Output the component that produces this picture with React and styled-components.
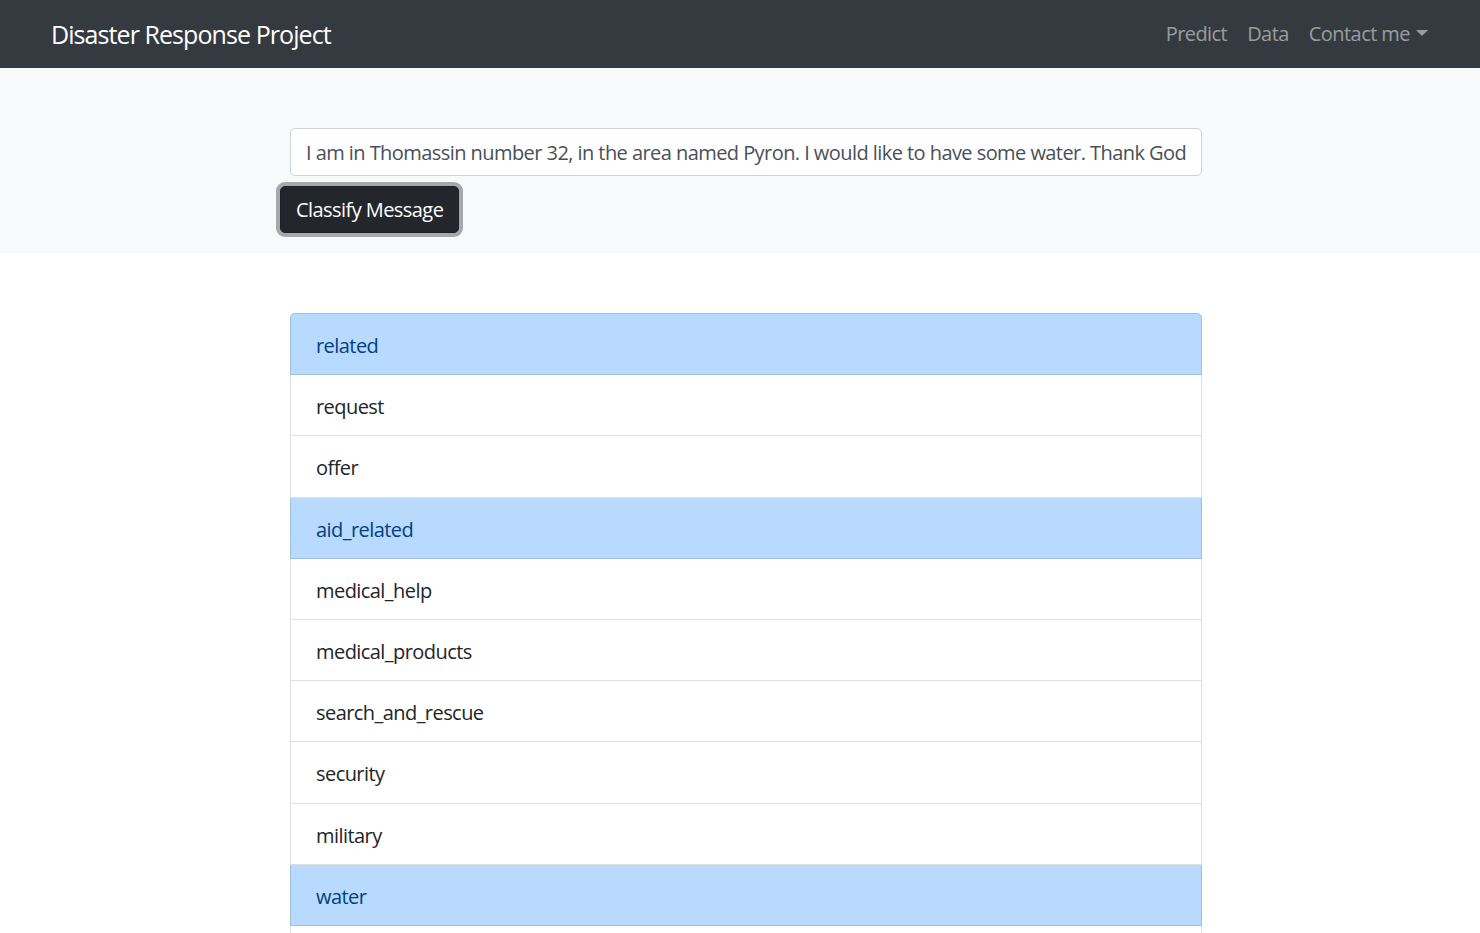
import React from 'react';
import styled, {createGlobalStyle} from 'styled-components';

const GlobalStyle = createGlobalStyle`
  html, body {
    margin: 0;
    padding: 0;
  }
  body {
    font-family: "Segoe UI", "Open Sans", "Noto Sans", sans-serif;
    font-size: 20px;
    line-height: 1.5;
    letter-spacing: -0.028em;
    color: #212529;
    background-color: #fff;
  }
  * {
    box-sizing: border-box;
  }
`;

const Navbar = styled.nav`
  display: flex;
  align-items: center;
  justify-content: space-between;
  height: 68px;
  padding: 0 42px 0 51px;
  background-color: #343a40;
`;

const Brand = styled.a`
  font-size: 25px;
  line-height: 37px;
  letter-spacing: -0.037em;
  color: #fff;
  text-decoration: none;
  white-space: nowrap;
`;

const NavList = styled.ul`
  display: flex;
  list-style: none;
  margin: 0;
  padding: 0;
`;

const NavLink = styled.a`
  display: block;
  padding: 0 10px;
  font-size: 20px;
  line-height: 30px;
  color: rgba(255, 255, 255, 0.5);
  text-decoration: none;
  white-space: nowrap;

  ${props => props.$toggle && `
    &::after {
      content: "";
      display: inline-block;
      margin-left: 0.3em;
      vertical-align: 0.255em;
      border-top: 0.3em solid;
      border-right: 0.3em solid transparent;
      border-left: 0.3em solid transparent;
      border-bottom: 0;
    }
  `}
`;

const Jumbotron = styled.section`
  background-color: #f8f9fa;
  padding: 60px 0 20px;
`;

const Container = styled.div`
  width: 912px;
  margin-left: calc(50% - 450px);
`;

const Input = styled.input`
  display: block;
  width: 100%;
  height: 48px;
  padding: 0 15px;
  font-family: inherit;
  font-size: 20px;
  letter-spacing: inherit;
  color: #495057;
  background-color: #fff;
  border: 1px solid #ced4da;
  border-radius: 5px;
  outline: none;
`;

const Button = styled.button`
  display: inline-block;
  height: 47px;
  margin: 10px 0 0 -10px;
  padding: 0 15px;
  font-family: inherit;
  font-size: 20px;
  line-height: 30px;
  letter-spacing: inherit;
  color: #fff;
  background-color: #23272b;
  border: 1px solid #1d2124;
  border-radius: 5px;
  box-shadow: 0 0 0 4px rgba(82, 88, 93, 0.5);
  cursor: pointer;
`;

const ListGroup = styled.ul`
  list-style: none;
  margin: 60px 0 0;
  padding: 0;
  border-radius: 5px;
`;

const ListItem = styled.li`
  padding: 17px 25px 13.2px;
  line-height: 30px;
  color: ${props => props.$active ? '#004085' : '#212529'};
  background-color: ${props => props.$active ? '#b8daff' : '#fff'};
  border: 1px solid rgba(0, 0, 0, 0.125);
  border-top-width: 0;

  &:first-child {
    border-top-width: 1px;
    border-top-left-radius: 5px;
    border-top-right-radius: 5px;
  }
`;

const message = 'I am in Thomassin number 32, in the area named Pyron. I would like to have some water. Thank God we are fine, but we desperately need water. Thanks';

const categories = [
  ['related', true],
  ['request', false],
  ['offer', false],
  ['aid_related', true],
  ['medical_help', false],
  ['medical_products', false],
  ['search_and_rescue', false],
  ['security', false],
  ['military', false],
  ['water', true],
  ['food', false],
  ['shelter', false],
  ['clothing', false],
  ['money', false],
  ['missing_people', false],
  ['refugees', false],
  ['death', false],
  ['other_aid', false],
  ['infrastructure_related', false],
  ['transport', false],
  ['buildings', false],
  ['electricity', false],
  ['tools', false],
  ['hospitals', false],
  ['shops', false],
  ['aid_centers', false],
  ['other_infrastructure', false],
  ['weather_related', false],
  ['floods', false],
  ['storm', false],
  ['fire', false],
  ['earthquake', false],
  ['cold', false],
  ['other_weather', false],
  ['direct_report', false],
];

function App() {
  return (
    <>
      <GlobalStyle />
      <Navbar>
        <Brand href="#">Disaster Response Project</Brand>
        <NavList>
          <li><NavLink href="#">Predict</NavLink></li>
          <li><NavLink href="#">Data</NavLink></li>
          <li><NavLink href="#" $toggle>Contact me</NavLink></li>
        </NavList>
      </Navbar>
      <Jumbotron>
        <Container>
          <Input type="text" defaultValue={message} />
          <Button type="button">Classify Message</Button>
        </Container>
      </Jumbotron>
      <Container>
        <ListGroup>
          {categories.map(([name, active]) => (
            <ListItem key={name} $active={active}>{name}</ListItem>
          ))}
        </ListGroup>
      </Container>
    </>
  );
}

export default App;
